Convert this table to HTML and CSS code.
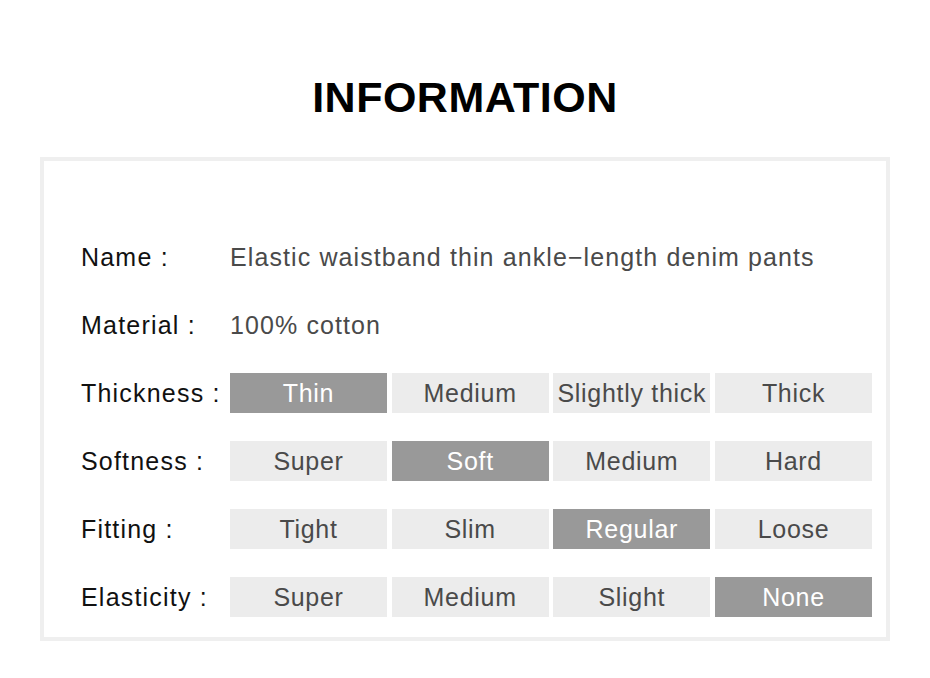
FILE: index.html
```html
<!DOCTYPE html>
<html>
<head>
<meta charset="utf-8">
<link rel="stylesheet" href="styles.css">
</head>
<body>
<div class="page">
  <h1 class="title">INFORMATION</h1>
  <div class="card">
    <div class="row">
      <div class="label">Name :</div>
      <div class="value">Elastic waistband thin ankle−length denim pants</div>
    </div>
    <div class="row">
      <div class="label">Material :</div>
      <div class="value">100% cotton</div>
    </div>
    <div class="row">
      <div class="label">Thickness :</div>
      <div class="opts">
        <div class="opt on">Thin</div>
        <div class="opt">Medium</div>
        <div class="opt">Slightly thick</div>
        <div class="opt">Thick</div>
      </div>
    </div>
    <div class="row">
      <div class="label">Softness :</div>
      <div class="opts">
        <div class="opt">Super</div>
        <div class="opt on">Soft</div>
        <div class="opt">Medium</div>
        <div class="opt">Hard</div>
      </div>
    </div>
    <div class="row">
      <div class="label">Fitting :</div>
      <div class="opts">
        <div class="opt">Tight</div>
        <div class="opt">Slim</div>
        <div class="opt on">Regular</div>
        <div class="opt">Loose</div>
      </div>
    </div>
    <div class="row">
      <div class="label">Elasticity :</div>
      <div class="opts">
        <div class="opt">Super</div>
        <div class="opt">Medium</div>
        <div class="opt">Slight</div>
        <div class="opt on">None</div>
      </div>
    </div>
  </div>
</div>
</body>
</html>
```
FILE: styles.css
```css
html, body {
  margin: 0;
  padding: 0;
  background: #fff;
}
body {
  font-family: "Liberation Sans", Arial, sans-serif;
  width: 930px;
  height: 678px;
  overflow: hidden;
}
.page {
  padding-top: 72px;
  display: flex;
  flex-direction: column;
  align-items: center;
}
.title {
  margin: 0;
  font-size: 43px;
  line-height: 50px;
  font-weight: bold;
  color: #000;
  letter-spacing: 0.5px;
}
.card {
  margin-top: 35px;
  border: 4px solid #efefef;
  padding: 76px 0 20px 37px;
  display: flex;
  flex-direction: column;
  gap: 28px;
  box-sizing: border-box;
  width: 850px;
  height: 484px;
}
.row {
  display: flex;
  align-items: center;
  height: 40px;
}
.label {
  width: 149px;
  flex: none;
  font-size: 25px;
  letter-spacing: 1.2px;
  color: #111;
  white-space: nowrap;
}
.value {
  font-size: 25px;
  letter-spacing: 1.1px;
  color: #4a4a4a;
  white-space: nowrap;
}
.opts {
  display: grid;
  grid-template-columns: repeat(4, 1fr);
  width: 642px;
  column-gap: 4.67px;
}
.opt {
  height: 40px;
  background: #ececec;
  color: #4a4a4a;
  font-size: 25px;
  letter-spacing: 0.7px;
  white-space: nowrap;
  display: flex;
  align-items: center;
  justify-content: center;
}
.opt.on {
  background: #999;
  color: #fff;
}
```
